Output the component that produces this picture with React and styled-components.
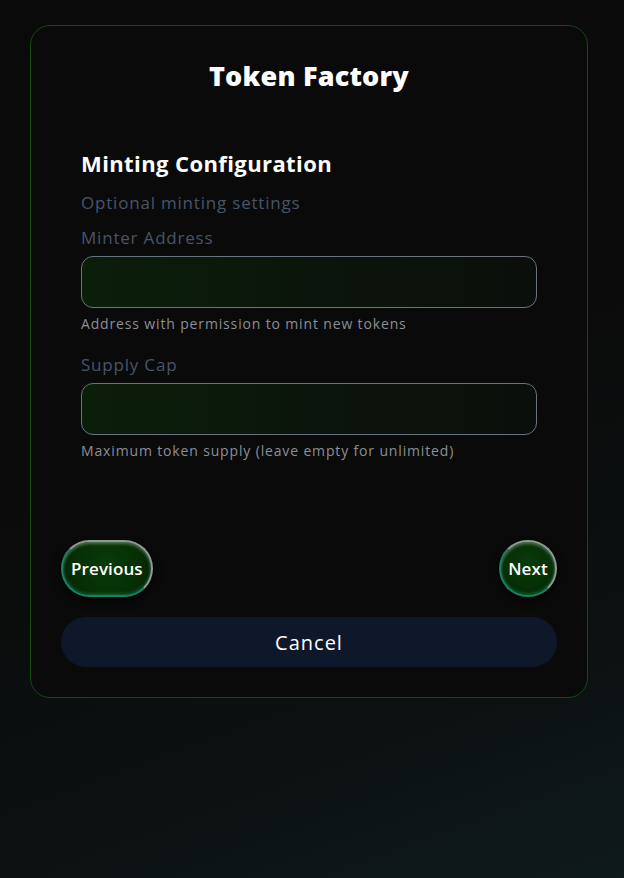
import React from "react";
import styled, { createGlobalStyle } from "styled-components";

const Global = createGlobalStyle`
  html, body { margin: 0; padding: 0; }
  body {
    min-height: 878px;
    background: linear-gradient(160deg, #0a0a0a 0%, #0b0b0b 45%, #0c1112 80%, #0f1a1b 100%);
    font-family: "Open Sans", "Noto Sans", sans-serif;
    color: #fff;
  }
`;

const Page = styled.div`
  padding: 25px 36px 40px 30px;
`;

const Card = styled.div`
  width: 558px;
  box-sizing: border-box;
  border: 1px solid #124a12;
  border-radius: 20px;
  background: #0a0a0a;
  padding: 30px 30px 30px;
`;

const Title = styled.h1`
  margin: 0;
  text-align: center;
  font-size: 27px;
  font-weight: 800;
  line-height: 40px;
  letter-spacing: 0.2px;
`;

const Section = styled.div`
  padding: 52px 20px 0;
  display: flex;
  flex-direction: column;
`;

const Heading = styled.h2`
  margin: 0;
  font-size: 22px;
  font-weight: 700;
  line-height: 30px;
  letter-spacing: 0.4px;
`;

const Sub = styled.p`
  margin: 12px 0 0;
  font-size: 17px;
  line-height: 26px;
  letter-spacing: 0.8px;
  color: #475569;
`;

const Field = styled.div`
  display: flex;
  flex-direction: column;
  margin-top: ${(p) => p.$top}px;
`;

const Label = styled.label`
  font-size: 17px;
  line-height: 26px;
  letter-spacing: 0.8px;
  color: #475569;
`;

const Input = styled.input`
  margin-top: 5px;
  height: 52px;
  box-sizing: border-box;
  border: 1px solid #6b7280;
  border-radius: 12px;
  background: linear-gradient(90deg, #0a1f0a 0%, #0b150b 50%, #0b0f0b 100%);
  color: #fff;
  font: inherit;
  padding: 0 14px;
  outline: none;
`;

const Help = styled.span`
  margin-top: 6px;
  font-size: 14px;
  line-height: 20px;
  letter-spacing: 0.85px;
  color: #8b8f98;
`;

const Nav = styled.div`
  display: flex;
  justify-content: space-between;
  align-items: center;
  margin-top: 79px;
`;

const NavButton = styled.button`
  height: 57px;
  min-width: 58px;
  padding: 0 ${(p) => p.$px}px;
  border-radius: 999px;
  border: 2px solid #1c8064;
  border-top-color: #8f9a92;
  border-right-color: #8f9a92;
  background: radial-gradient(circle at 50% 40%, #0a3a0a 0%, #063006 55%, #042004 100%);
  box-shadow: inset 0 2px 3px rgba(255, 255, 255, 0.3), inset 0 -2px 3px rgba(16, 185, 129, 0.3), 0 4px 10px rgba(0, 0, 0, 0.7);
  color: #fff;
  font-family: inherit;
  font-size: 17px;
  font-weight: 600;
  letter-spacing: 0.1px;
  cursor: pointer;
`;

const Cancel = styled.button`
  margin-top: 20px;
  width: 100%;
  height: 50px;
  border: none;
  border-radius: 25px;
  background: #0f182b;
  color: #fff;
  font-family: inherit;
  font-size: 20px;
  font-weight: 400;
  letter-spacing: 1px;
  cursor: pointer;
`;

export default function App() {
  return (
    <>
      <Global />
      <Page>
        <Card>
          <Title>Token Factory</Title>
          <Section>
            <Heading>Minting Configuration</Heading>
            <Sub>Optional minting settings</Sub>
            <Field $top={9}>
              <Label>Minter Address</Label>
              <Input />
              <Help>Address with permission to mint new tokens</Help>
            </Field>
            <Field $top={18}>
              <Label>Supply Cap</Label>
              <Input />
              <Help>Maximum token supply (leave empty for unlimited)</Help>
            </Field>
          </Section>
          <Nav>
            <NavButton $px={8}>Previous</NavButton>
            <NavButton $px={6}>Next</NavButton>
          </Nav>
          <Cancel>Cancel</Cancel>
        </Card>
      </Page>
    </>
  );
}
